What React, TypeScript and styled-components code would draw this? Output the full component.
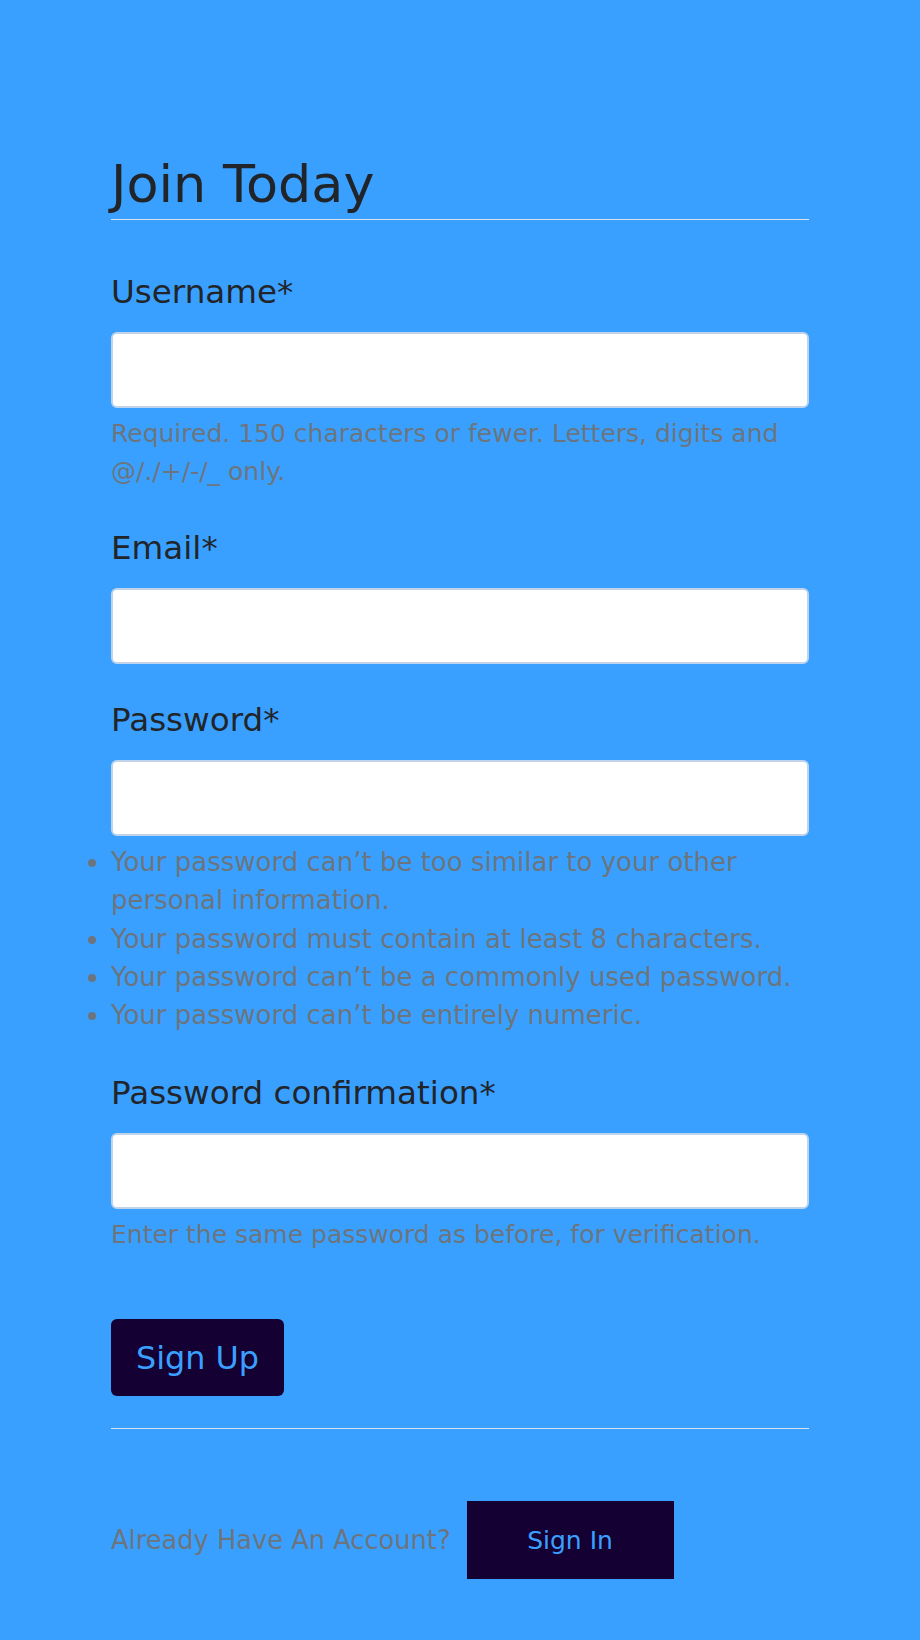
import React from "react";
import styled, { createGlobalStyle } from "styled-components";

const GlobalStyle = createGlobalStyle`
  html, body {
    margin: 0;
    padding: 0;
    background: #3aa0ff;
  }
  body {
    font-family: "DejaVu Sans", "Open Sans", sans-serif;
    color: #212529;
  }
  * { box-sizing: border-box; }
`;

const Page = styled.div`
  min-height: 1640px;
  background: #3aa0ff;
`;

const Container = styled.main`
  max-width: 698px;
  margin: 0 auto;
  padding: 154px 0 59px;
`;

const Form = styled.form`
  display: flex;
  flex-direction: column;
`;

const Legend = styled.h1`
  margin: 0 0 48px;
  padding: 0 0 5px;
  font-size: 52.4px;
  font-weight: 400;
  line-height: 60px;
  color: #212529;
  border-bottom: 1px solid #dde3ea;
`;

const Group = styled.div<{ $gap?: number }>`
  display: flex;
  flex-direction: column;
  margin-bottom: ${(p) => p.$gap ?? 32}px;
`;

const Label = styled.label`
  font-size: 32.6px;
  line-height: 48px;
  color: #212529;
`;

const Input = styled.input`
  margin-top: 16px;
  width: 100%;
  height: 76px;
  border: 2px solid #bfd4ea;
  border-radius: 6px;
  background: #ffffff;
  font-size: 25px;
  padding: 0 18px;
  outline: none;
`;

const Help = styled.div`
  margin-top: 7px;
  font-size: 25px;
  line-height: 38.4px;
  color: #6c757d;
`;

const HelpList = styled.ul`
  margin: 7px 0 0;
  padding: 0;
  list-style: disc outside;
  font-size: 26px;
  line-height: 38.4px;
  color: #6c757d;
`;

const SignUpButton = styled.button`
  align-self: flex-start;
  height: 77px;
  padding: 0 25px;
  border: none;
  border-radius: 6px;
  background: #140033;
  color: #3aa0ff;
  font-family: "DejaVu Sans", "Open Sans", sans-serif;
  font-size: 31.8px;
  line-height: 1;
  cursor: pointer;
`;

const Footer = styled.div`
  margin-top: 32px;
  padding-top: 72px;
  border-top: 1px solid #dde3ea;
  display: flex;
  align-items: center;
  gap: 16px;
`;

const FooterText = styled.span`
  font-size: 25.7px;
  line-height: 38.4px;
  color: #6c757d;
`;

const SignInLink = styled.a`
  display: inline-flex;
  align-items: center;
  justify-content: center;
  width: 207px;
  height: 78px;
  background: #140033;
  color: #3aa0ff;
  font-size: 25px;
  text-decoration: none;
`;

export default function App() {
  return (
    <Page>
      <GlobalStyle />
      <Container>
        <Form onSubmit={(e) => e.preventDefault()}>
          <Legend>Join Today</Legend>

          <Group>
            <Label htmlFor="id_username">Username*</Label>
            <Input id="id_username" type="text" />
            <Help>Required. 150 characters or fewer. Letters, digits and @/./+/-/_ only.</Help>
          </Group>

          <Group>
            <Label htmlFor="id_email">Email*</Label>
            <Input id="id_email" type="email" />
          </Group>

          <Group $gap={34}>
            <Label htmlFor="id_password1">Password*</Label>
            <Input id="id_password1" type="password" />
            <HelpList>
              <li>Your password can’t be too similar to your other personal information.</li>
              <li>Your password must contain at least 8 characters.</li>
              <li>Your password can’t be a commonly used password.</li>
              <li>Your password can’t be entirely numeric.</li>
            </HelpList>
          </Group>

          <Group $gap={65}>
            <Label htmlFor="id_password2">Password confirmation*</Label>
            <Input id="id_password2" type="password" />
            <Help>Enter the same password as before, for verification.</Help>
          </Group>

          <SignUpButton type="submit">Sign Up</SignUpButton>
        </Form>

        <Footer>
          <FooterText>Already Have An Account?</FooterText>
          <SignInLink href="#">Sign In</SignInLink>
        </Footer>
      </Container>
    </Page>
  );
}
